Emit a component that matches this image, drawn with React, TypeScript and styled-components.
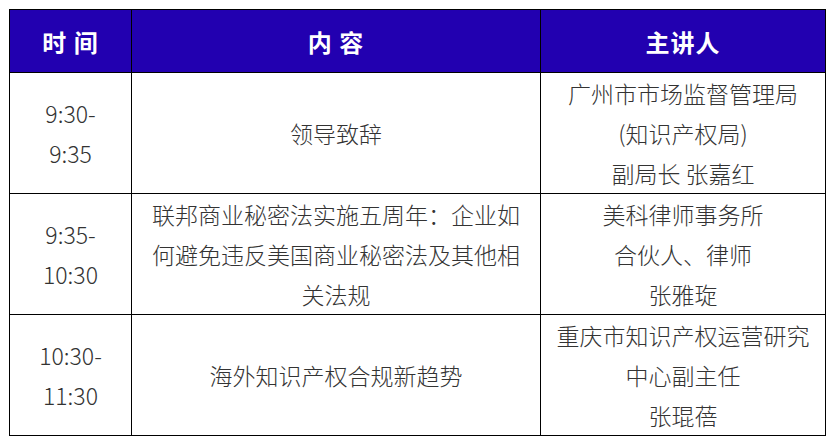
import styled, { createGlobalStyle } from "styled-components";

const GlobalStyle = createGlobalStyle`
  html, body {
    margin: 0;
    padding: 0;
    background: #fff;
  }
  body {
    font-family: "Noto Sans CJK SC", "Noto Sans", sans-serif;
  }
`;

const Page = styled.div`
  padding: 9px 0 0 9px;
`;

const Table = styled.table`
  border-collapse: collapse;
  table-layout: fixed;
  width: 813px;
  color: #333;
`;

const HeadCell = styled.th<{ $w: number }>`
  width: ${(p) => p.$w}px;
  height: 62px;
  padding: 0;
  background: #2200b0;
  color: #fff;
  font-size: 24px;
  font-weight: bold;
  text-align: center;
  vertical-align: middle;
  border: 1px solid #000;
  letter-spacing: 1px;
`;

const Cell = styled.td`
  height: 121px;
  padding: 0 10px;
  font-size: 23px;
  font-weight: 300;
  line-height: 40px;
  text-align: center;
  vertical-align: middle;
  border: 1px solid #000;
  box-sizing: border-box;
`;

const Line = styled.div`
  white-space: nowrap;
`;

interface Item {
  time: string[];
  topic: string;
  speaker: string[];
}

const items: Item[] = [
  {
    time: ["9:30-", "9:35"],
    topic: "领导致辞",
    speaker: ["广州市市场监督管理局", "(知识产权局)", "副局长 张嘉红"],
  },
  {
    time: ["9:35-", "10:30"],
    topic: "联邦商业秘密法实施五周年：企业如何避免违反美国商业秘密法及其他相关法规",
    speaker: ["美科律师事务所", "合伙人、律师", "张雅琁"],
  },
  {
    time: ["10:30-", "11:30"],
    topic: "海外知识产权合规新趋势",
    speaker: ["重庆市知识产权运营研究", "中心副主任", "张琨蓓"],
  },
];

export default function App() {
  return (
    <Page>
      <GlobalStyle />
      <Table>
        <thead>
          <tr>
            <HeadCell $w={121}>时 间</HeadCell>
            <HeadCell $w={408}>内 容</HeadCell>
            <HeadCell $w={284}>主讲人</HeadCell>
          </tr>
        </thead>
        <tbody>
          {items.map((it, i) => (
            <tr key={i}>
              <Cell>
                {it.time.map((t) => (
                  <Line key={t}>{t}</Line>
                ))}
              </Cell>
              <Cell>{it.topic}</Cell>
              <Cell>
                {it.speaker.map((s) => (
                  <Line key={s}>{s}</Line>
                ))}
              </Cell>
            </tr>
          ))}
        </tbody>
      </Table>
    </Page>
  );
}
